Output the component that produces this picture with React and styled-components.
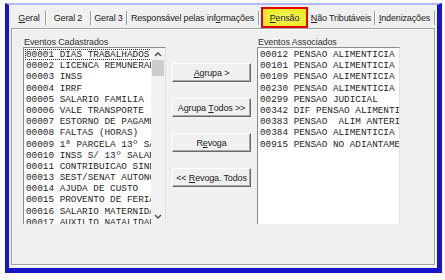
import styled, { createGlobalStyle } from 'styled-components';

const GlobalStyle = createGlobalStyle`
  html, body {
    margin: 0;
    padding: 0;
    background: #fafafa;
  }
  body {
    font-family: "Liberation Sans", Arial, sans-serif;
  }
`;

const Page = styled.div`
  width: 445px;
  height: 280px;
  padding: 3px 3px 0 5px;
  box-sizing: border-box;
`;

const Frame = styled.div`
  width: 437px;
  height: 270px;
  box-sizing: border-box;
  border-top: 2px solid #b4b8f0;
  border-left: 4px solid #1616c8;
  border-right: 5px solid #1616c8;
  border-bottom: 5px solid #1616c8;
  background: #f0f0f0;
  padding: 2px 2px 0 2px;
  display: flex;
  flex-direction: column;
`;

const TabStrip = styled.div`
  display: flex;
  align-items: center;
  height: 21px;
  padding-left: 2px;
`;

const Tab = styled.div`
  width: ${(p) => p.$w}px;
  height: 14px;
  display: flex;
  align-items: center;
  justify-content: center;
  font-size: 9px;
  letter-spacing: -0.15px;
  color: #222;
  border-right: 1px solid #9a9a9a;
  box-shadow: 1px 0 0 #ffffff;
  white-space: nowrap;
  box-sizing: border-box;
`;

const ActiveTab = styled.div`
  width: 47px;
  height: 21px;
  margin-left: 2px;
  box-sizing: border-box;
  border: 2px solid #e40000;
  background: radial-gradient(ellipse at center, #f8f870 0%, #eaea20 80%);
  display: flex;
  align-items: center;
  justify-content: center;
  font-size: 9px;
  letter-spacing: -0.15px;
  color: #222;
`;

const Key = styled.span`
  text-decoration: underline;
  text-underline-offset: 1px;
`;

const TabPage = styled.div`
  width: 424px;
  height: 237px;
  box-sizing: border-box;
  border: 1px solid #a0a0a0;
  box-shadow: inset 1px 1px 0 #ffffff, 1px 1px 0 #ffffff;
  padding: 8px 0 0 11px;
  display: flex;
  gap: 6px;
`;

const Column = styled.div`
  display: flex;
  flex-direction: column;
  width: 143px;
`;

const Label = styled.div`
  font-size: 9px;
  letter-spacing: -0.1px;
  line-height: 10px;
  height: 10px;
  color: #333;
  padding-left: 1px;
`;

const ListBox = styled.div`
  position: relative;
  height: 176px;
  background: #ffffff;
  border-left: 1px solid #8c8c8c;
  border-top: 1px solid #8c8c8c;
  border-right: 1px solid #e2e2e2;
  display: flex;
  overflow: hidden;
`;

const Items = styled.div`
  flex: 1;
  overflow: hidden;
  padding: 1px 0 0 1px;
`;

const Item = styled.div`
  font-family: "Liberation Mono", "Courier New", monospace;
  font-size: 9.35px;
  line-height: 11.2px;
  height: 11.2px;
  color: #1e1e1e;
  white-space: pre;
  padding-left: 1px;
  box-sizing: border-box;
  outline: ${(p) => (p.$focus ? '1px dotted #333' : 'none')};
  outline-offset: -1px;
  width: ${(p) => (p.$focus ? '127px' : 'auto')};
  overflow: hidden;
`;

const ScrollBar = styled.div`
  width: 14px;
  background: #f2f2f2;
  display: flex;
  flex-direction: column;
  align-items: center;
`;

const Arrow = styled.div`
  height: 12px;
  width: 14px;
  display: flex;
  align-items: center;
  justify-content: center;
  margin-top: ${(p) => (p.$down ? 'auto' : '0')};
  margin-bottom: ${(p) => (p.$down ? '2px' : '0')};
`;

const Thumb = styled.div`
  width: 12px;
  height: 16px;
  background: #cdcdcd;
`;

const ButtonColumn = styled.div`
  width: 79px;
  display: flex;
  flex-direction: column;
  gap: 16px;
  padding-top: 26px;
`;

const Button = styled.div`
  height: 19px;
  box-sizing: border-box;
  border-top: 1px solid #ffffff;
  border-left: 1px solid #ffffff;
  border-right: 1px solid #6a6a6a;
  border-bottom: 1px solid #6a6a6a;
  box-shadow: inset -1px -1px 0 #a8a8a8;
  background: #f0f0f0;
  display: flex;
  align-items: center;
  justify-content: center;
  font-size: 9px;
  letter-spacing: -0.15px;
  color: #222;
  white-space: pre;
`;

const Chevron = ({ down }) => (
  <svg width="8" height="5" viewBox="0 0 8 5">
    <path
      d={down ? 'M1 1 L4 4 L7 1' : 'M1 4 L4 1 L7 4'}
      fill="none"
      stroke="#444"
      strokeWidth="1.3"
    />
  </svg>
);

const cadastrados = [
  '00001 DIAS TRABALHADOS',
  '00002 LICENCA REMUNERADA',
  '00003 INSS',
  '00004 IRRF',
  '00005 SALARIO FAMILIA',
  '00006 VALE TRANSPORTE',
  '00007 ESTORNO DE PAGAMENTO',
  '00008 FALTAS (HORAS)',
  '00009 1ª PARCELA 13º SALARIO',
  '00010 INSS S/ 13º SALARIO',
  '00011 CONTRIBUICAO SINDICAL',
  '00013 SEST/SENAT AUTONOMO',
  '00014 AJUDA DE CUSTO',
  '00015 PROVENTO DE FERIAS',
  '00016 SALARIO MATERNIDADE',
  '00017 AUXILIO NATALIDADE',
];

const associados = [
  '00012 PENSAO ALIMENTICIA',
  '00101 PENSAO ALIMENTICIA',
  '00109 PENSAO ALIMENTICIA',
  '00230 PENSAO ALIMENTICIA',
  '00299 PENSAO JUDICIAL',
  '00342 DIF PENSAO ALIMENTICIA',
  '00383 PENSAO  ALIM ANTERIOR',
  '00384 PENSAO ALIMENTICIA',
  '00915 PENSAO NO ADIANTAMENTO',
];

export default function App() {
  return (
    <Page>
      <GlobalStyle />
      <Frame>
        <TabStrip>
          <Tab $w={33}>
            <Key>G</Key>eral
          </Tab>
          <Tab $w={45}>Geral 2</Tab>
          <Tab $w={36}>Geral 3</Tab>
          <Tab $w={132}>
            Responsável pelas inf<Key>o</Key>rmações
          </Tab>
          <ActiveTab>
            <Key>P</Key>ensão
          </ActiveTab>
          <Tab $w={67}>
            <Key>N</Key>ão Tributáveis
          </Tab>
          <Tab $w={60}>
            <Key>I</Key>ndenizações
          </Tab>
        </TabStrip>
        <TabPage>
          <Column>
            <Label>Eventos Cadastrados</Label>
            <ListBox>
              <Items>
                {cadastrados.map((t, i) => (
                  <Item key={t} $focus={i === 0}>
                    {t}
                  </Item>
                ))}
              </Items>
              <ScrollBar>
                <Arrow>
                  <Chevron />
                </Arrow>
                <Thumb />
                <Arrow $down>
                  <Chevron down />
                </Arrow>
              </ScrollBar>
            </ListBox>
          </Column>
          <ButtonColumn>
            <Button>
              <Key>A</Key>grupa &gt;
            </Button>
            <Button>
              Agrupa <Key>T</Key>odos &gt;&gt;
            </Button>
            <Button>
              R<Key>e</Key>voga
            </Button>
            <Button>
              &lt;&lt; <Key>R</Key>evoga. Todos
            </Button>
          </ButtonColumn>
          <Column>
            <Label>Eventos Associados</Label>
            <ListBox>
              <Items>
                {associados.map((t) => (
                  <Item key={t}>{t}</Item>
                ))}
              </Items>
            </ListBox>
          </Column>
        </TabPage>
      </Frame>
    </Page>
  );
}
